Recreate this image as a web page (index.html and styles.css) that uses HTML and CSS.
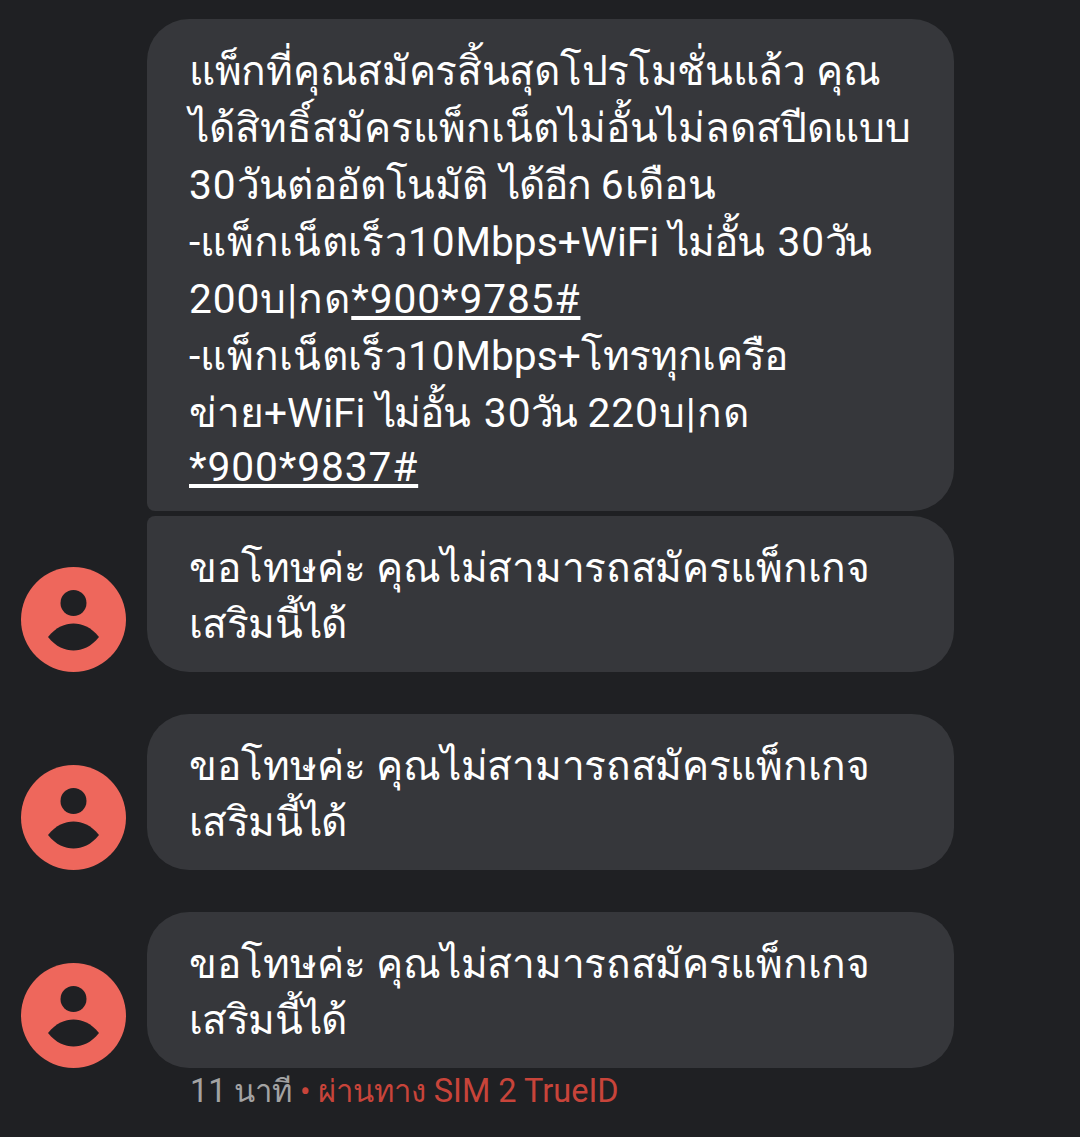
FILE: index.html
```html
<!DOCTYPE html>
<html lang="th">
<head>
<meta charset="utf-8">
<title>Messages</title>
<link rel="stylesheet" href="styles.css">
</head>
<body>
<svg class="defs" aria-hidden="true"><symbol id="person" viewBox="0 0 105 105"><circle class="disc" cx="52.5" cy="52.5" r="52.5"/><circle class="cut" cx="52.5" cy="36" r="13"/><path class="cut" d="M27 70C35 60 44 56.500 52.500 56.500C61 56.500 70 60 78 70C70 80 61 83.500 52.500 83.500C44 83.500 35 80 27 70Z"/></symbol></svg>
<main class="thread">
  <div class="row">
    <div class="gutter"></div>
    <div class="bubble top">
      <div class="line"><span class="ts">แพ็กที่คุณสมัครสิ้นสุดโปรโมชั่นแล้ว</span> คุณ</div>
      <div class="line">ได้สิทธิ์สมัครแพ็กเน็ตไม่อั้นไม่ลดสปีดแบบ</div>
      <div class="line"><span class="num">30</span><span class="ts">วันต่ออัตโนมัติ</span> <span class="dai">ได้อีก</span> <span class="num">6</span><span class="ts">เดือน</span></div>
      <div class="line">-<span class="wide">แพ็กเน็ตเร็ว</span><span class="num">10</span>Mbps+WiFi <span class="mai">ไม่อั้น</span> <span class="num">30</span><span class="wan">วัน</span></div>
      <div class="line"><span class="num">200</span><span class="kd">บ|กด</span><u class="num">*900*9785#</u></div>
      <div class="line">-<span class="wide">แพ็กเน็ตเร็ว</span><span class="num">10</span>Mbps+<span class="ts">โทรทุกเครือ</span></div>
      <div class="line">ข่าย+WiFi <span class="mai">ไม่อั้น</span> <span class="num">30</span><span class="wan">วัน</span> <span class="num">220</span><span class="kd">บ|กด</span></div>
      <div class="line last"><u class="num">*900*9837#</u></div>
    </div>
  </div>
  <div class="row second">
    <div class="gutter"><svg class="avatar"><use href="#person"/></svg></div>
    <div class="bubble joined short">
      <div class="line">ขอโทษค่ะ คุณ<span class="ts">ไม่สามารถสมัครแพ็กเกจ</span></div>
      <div class="line"><span class="tl">เสริมนี้ได้</span></div>
    </div>
  </div>
  <div class="row spaced">
    <div class="gutter"><svg class="avatar"><use href="#person"/></svg></div>
    <div class="bubble short">
      <div class="line">ขอโทษค่ะ คุณ<span class="ts">ไม่สามารถสมัครแพ็กเกจ</span></div>
      <div class="line"><span class="tl">เสริมนี้ได้</span></div>
    </div>
  </div>
  <div class="row spaced">
    <div class="gutter"><svg class="avatar"><use href="#person"/></svg></div>
    <div class="bubble short">
      <div class="line">ขอโทษค่ะ คุณ<span class="ts">ไม่สามารถสมัครแพ็กเกจ</span></div>
      <div class="line"><span class="tl">เสริมนี้ได้</span></div>
    </div>
  </div>
  <div class="meta"><span class="time"><span class="metalat">11</span> นาที</span><span class="dot"> • </span><span class="via">ผ่านทาง <span class="metalat">SIM 2 TrueID</span></span></div>
</main>
</body>
</html>
```
FILE: styles.css
```css
html, body { margin: 0; padding: 0; background: #1f2023; }
body { width: 1080px; height: 1137px; overflow: hidden; font-family: Roboto, "Noto Sans", sans-serif; }
.defs { display: none; }
.disc { fill: #ee675c; }
.cut { fill: #1f2023; }
.thread { display: flex; flex-direction: column; padding-top: 19px; }
.row { display: flex; align-items: flex-end; }
.second { margin-top: 5px; }
.spaced { margin-top: 42px; }
.gutter { width: 147px; flex: none; display: flex; padding-left: 21px; box-sizing: border-box; }
.avatar { width: 105px; height: 105px; display: block; }
.bubble { width: 807px; box-sizing: border-box; background: #36373b; color: #fff; border-radius: 42px; padding: 24px 42px 19px; font-size: 40.7px; }
.top { border-bottom-left-radius: 8px; }
.joined { border-top-left-radius: 8px; }
.short { padding-bottom: 20px; }
.line { height: 57px; line-height: 57px; white-space: nowrap; }
.short .line { height: 56px; line-height: 56px; }
.line.last { height: 50px; line-height: 50px; }
.num { letter-spacing: .9px; }
.ts { letter-spacing: -.3px; }
.tl { letter-spacing: -.6px; }
.wide { letter-spacing: .3px; }
.kd { letter-spacing: 1px; }
.dai { letter-spacing: -1px; margin-left: 2px; }
.mai { letter-spacing: -1.2px; margin-right: 4px; }
.wan { letter-spacing: -4px; margin-right: 3px; }
.meta { margin: 3px 0 0 190px; font-size: 31px; line-height: 40px; white-space: pre; }
.metalat { font-size: 32.5px; }
.time { color: #a3a3a3; }
.dot, .via { color: #c8443a; }
```
